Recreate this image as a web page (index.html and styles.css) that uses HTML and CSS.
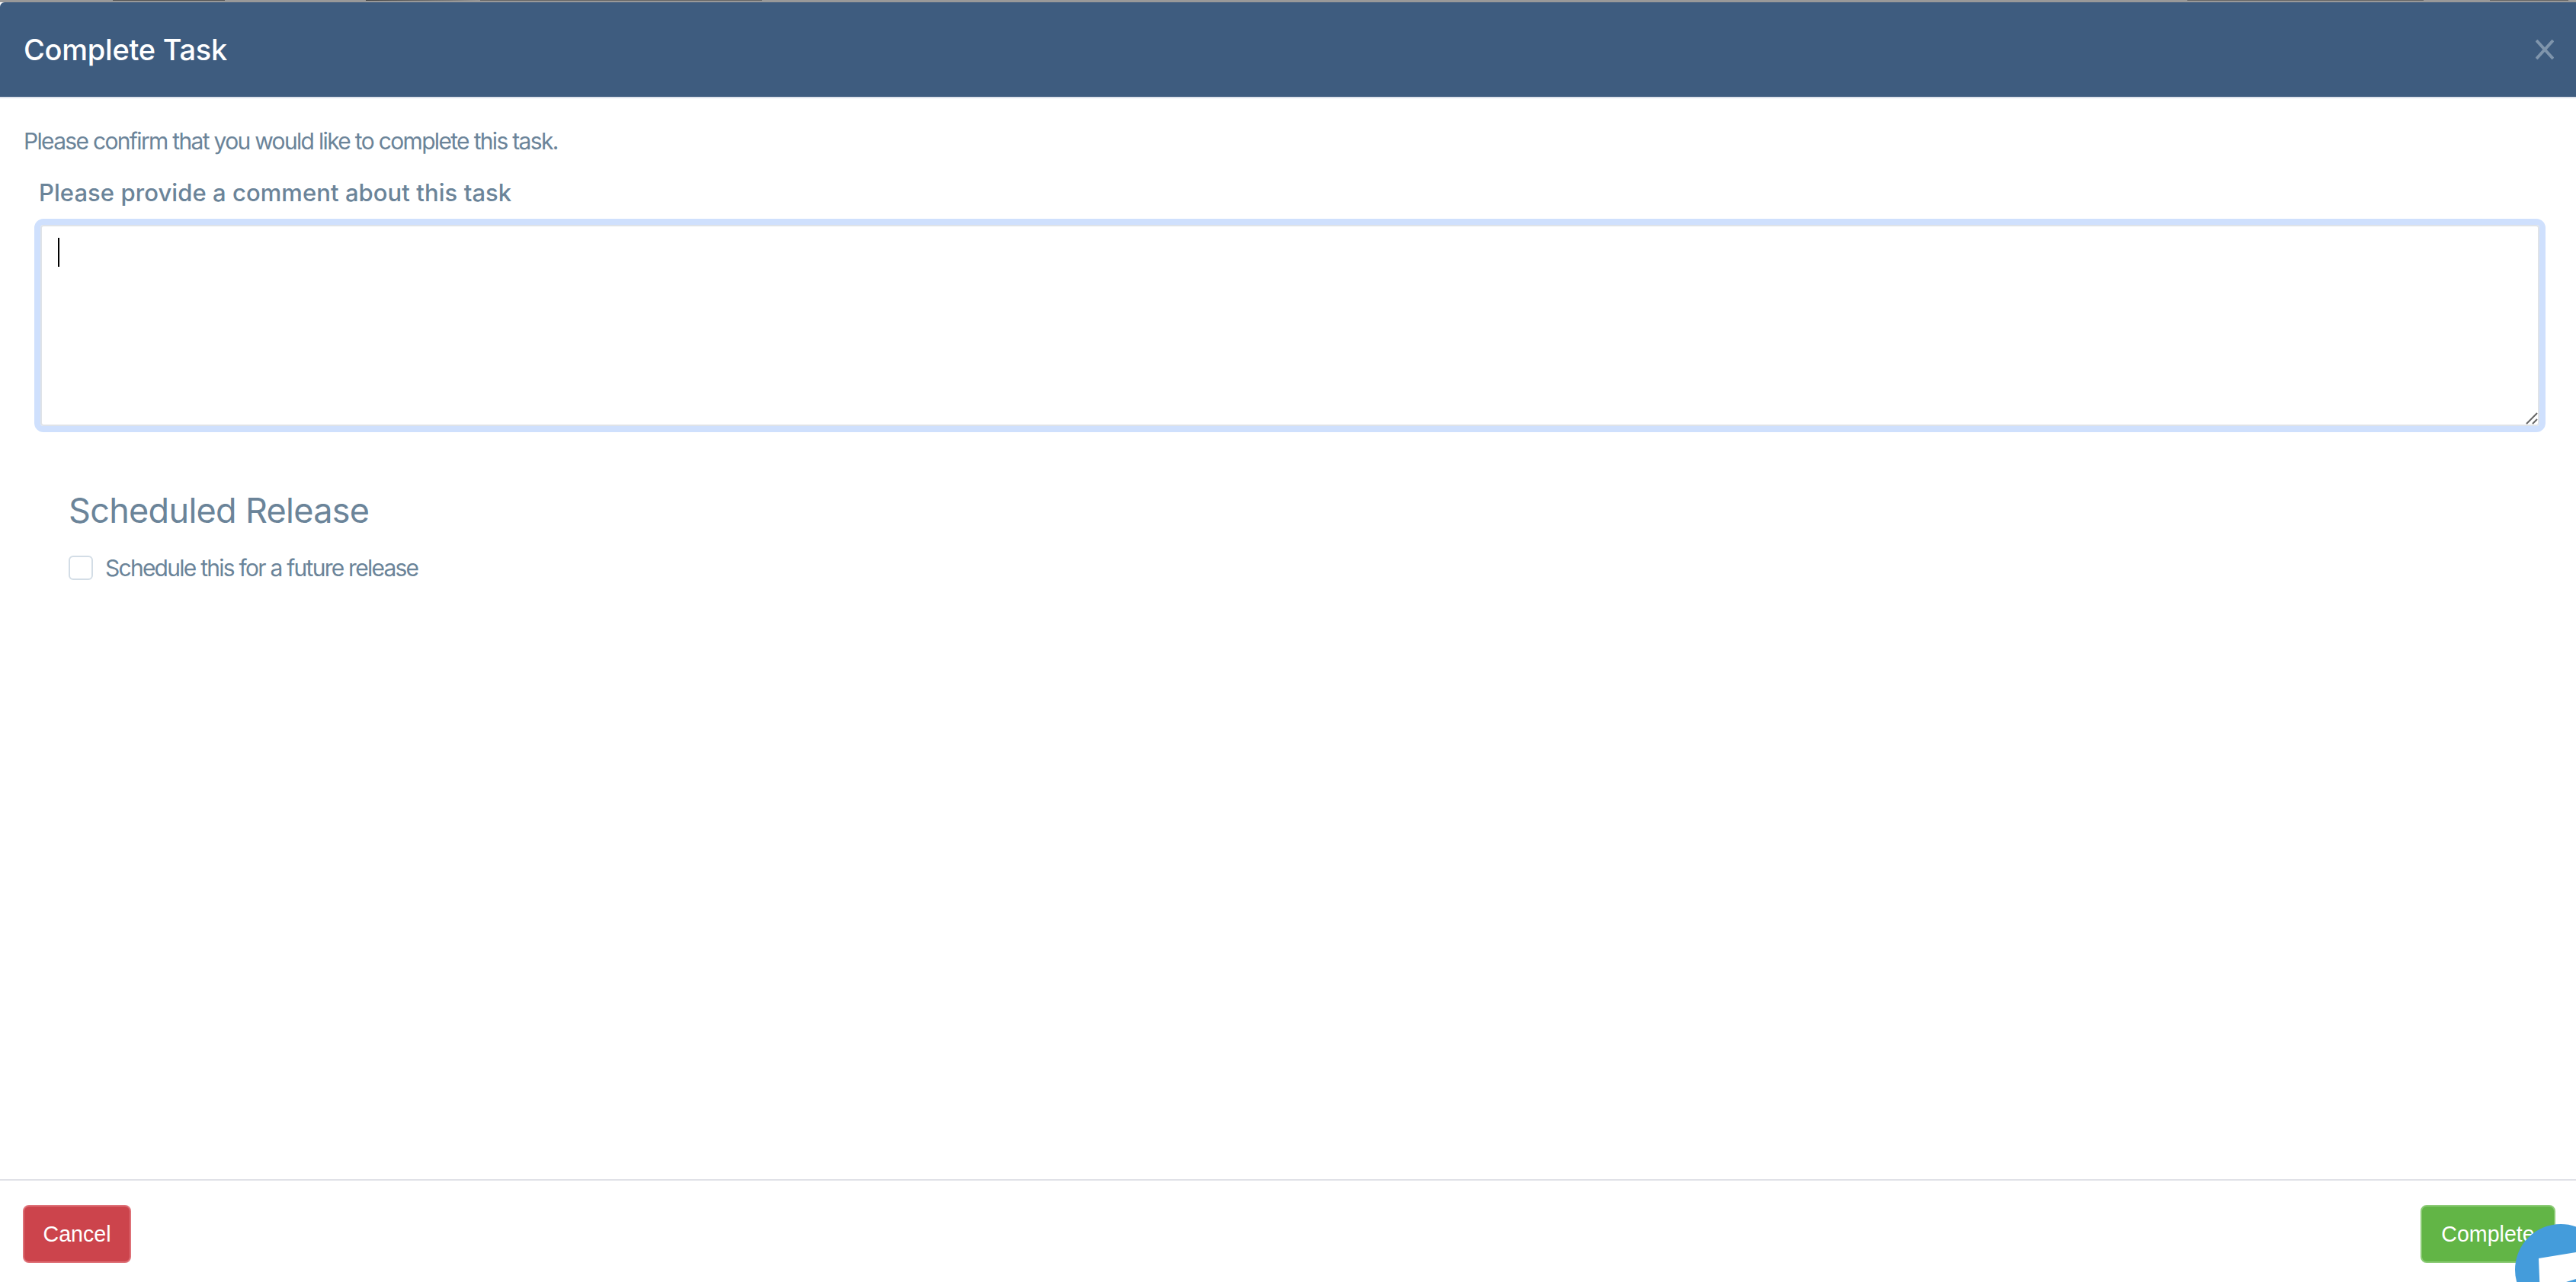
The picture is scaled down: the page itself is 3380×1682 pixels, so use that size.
FILE: index.html
```html
<!DOCTYPE html>
<html lang="en">
  <head>
    <meta charset="UTF-8" />
    <title>Complete Task</title>
    <link rel="stylesheet" href="styles.css">
  </head>
  <body>
    <div class="backdrop-strip"></div>
    <div class="modal">
      <header class="modal-header">
        <h1>Complete Task</h1>
        <button class="close" type="button" aria-label="Close">
          <svg viewBox="0 0 24 26" width="24" height="26">
            <path d="M1 1 L23 25 M23 1 L1 25" />
          </svg>
        </button>
      </header>

      <main class="modal-body">
        <p class="intro">Please confirm that you would like to complete this task.</p>

        <div class="comment-group">
          <label class="comment-label" for="comment">Please provide a comment about this task</label>
          <div class="comment-box">
            <span class="caret"></span>
            <svg class="grip" viewBox="0 0 16 16" width="16" height="16">
              <path d="M1 15 L15 1 M9 15 L15 9" />
            </svg>
          </div>
        </div>

        <section class="release">
          <h2>Scheduled Release</h2>
          <label class="check-row">
            <span class="checkbox"></span>
            Schedule this for a future release
          </label>
        </section>
      </main>

      <footer class="modal-footer">
        <button class="btn btn-cancel" type="button">Cancel</button>
        <button class="btn btn-complete" type="button">Complete</button>
      </footer>
    </div>

    <div class="launcher">
      <svg viewBox="0 0 120 120" width="120" height="120">
        <path d="M31 45 L80 37 L80 120 L34 120 Z" fill="#fff" />
        <path d="M67 76 L80 72 L80 120 L67 120 Z" fill="#449cdb" />
      </svg>
    </div>
  </body>
</html>
```

FILE: styles.css
```css
* {
  box-sizing: border-box;
}

html,
body {
  margin: 0;
  height: 1682px;
  overflow: hidden;
}

body {
  font-family: Inter, "Noto Sans", sans-serif;
  background-color: #ffffff;
  color: #6b8499;
  display: flex;
  flex-direction: column;
  position: relative;
}

/* page behind the modal peeking out above it */
.backdrop-strip {
  height: 3px;
  flex: none;
  background-color: #999999;
  background-image: linear-gradient(
    to right,
    #999 148px,
    #555 148px,
    #555 295px,
    #999 295px,
    #999 480px,
    #444 480px,
    #777 590px,
    #999 630px,
    #666 630px,
    #666 1000px,
    #999 1000px,
    #999 2870px,
    #666 2870px,
    #666 3180px,
    #999 3180px,
    #999 3267px,
    #666 3267px,
    #666 3370px,
    #999 3370px
  );
  background-size: 100% 1px;
  background-repeat: no-repeat;
}

.modal {
  flex: 1;
  display: flex;
  flex-direction: column;
  min-height: 0;
}

.modal-header {
  height: 126px;
  flex: none;
  background-color: #3e5c7f;
  border-bottom: 2px solid #dfe3ec;
  border-top-left-radius: 6px;
  display: flex;
  align-items: center;
  justify-content: space-between;
  padding: 0 29px 0 31px;
}

.modal-header h1 {
  margin: 0;
  font-size: 38px;
  font-weight: 500;
  letter-spacing: -0.25px;
  color: #ffffff;
}

.close {
  border: none;
  background: none;
  padding: 0;
  display: flex;
}

.close path {
  stroke: #7f95ac;
  stroke-width: 4;
  fill: none;
}

.modal-body {
  flex: 1;
  padding: 38px 40px 0 31px;
}

.intro {
  margin: 0;
  font-size: 30px;
  line-height: 36px;
  letter-spacing: -1.68px;
}

.comment-group {
  margin: 32px 0 0 14px;
}

.comment-label {
  display: block;
  font-size: 31px;
  line-height: 36px;
  font-weight: 500;
  letter-spacing: 0.07px;
  margin-left: 6px;
}

.comment-box {
  position: relative;
  height: 280px;
  margin-top: 16px;
  border: 8px solid #cfe0fd;
  border-radius: 12px;
  background-color: #ffffff;
  box-shadow: inset 0 0 0 2px #dfe3e8;
}

.caret {
  display: block;
  position: absolute;
  left: 23px;
  top: 17px;
  width: 2px;
  height: 38px;
  background-color: #000000;
}

.grip {
  position: absolute;
  right: 2px;
  bottom: 2px;
}

.grip path {
  stroke: #666666;
  stroke-width: 2;
  fill: none;
}

.release {
  padding: 0 0 0 59px;
  margin-top: 76px;
}

.release h2 {
  margin: 0;
  font-size: 45px;
  line-height: 54px;
  font-weight: 400;
  letter-spacing: -0.7px;
}

.check-row {
  display: flex;
  align-items: center;
  gap: 16px;
  margin-top: 30px;
  font-size: 30px;
  line-height: 36px;
  letter-spacing: -1.75px;
}

.checkbox {
  width: 32px;
  height: 32px;
  border: 2px solid #d3dde6;
  border-radius: 6px;
}

.modal-footer {
  flex: none;
  height: 135px;
  border-top: 2px solid #e0e1e7;
  display: flex;
  justify-content: space-between;
  padding: 32px 27px 0 30px;
}

.btn {
  height: 76px;
  border-radius: 8px;
  border: 2px solid;
  color: #ffffff;
  font-family: "Liberation Sans", Arial, sans-serif;
  font-size: 28.6px;
  padding: 0;
}

.btn-cancel {
  width: 142px;
  background-color: #cc444c;
  border-color: #de7077;
}

.btn-complete {
  width: 177px;
  background-color: #62b546;
  border-color: #8bca75;
}

.launcher {
  position: absolute;
  left: 3300px;
  top: 1606px;
  width: 120px;
  height: 120px;
  border-radius: 50%;
  background-color: #449cdb;
  overflow: hidden;
}
```
